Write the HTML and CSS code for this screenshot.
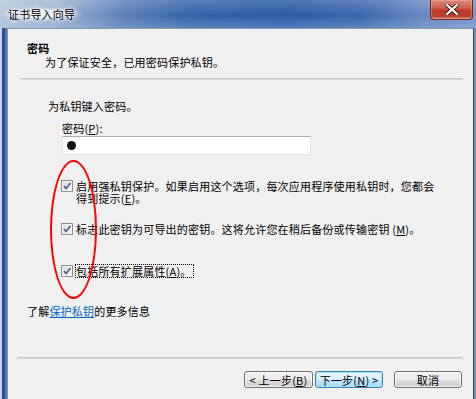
FILE: index.html
```html
<!DOCTYPE html>
<html lang="zh-CN">
<head>
    <meta charset="UTF-8">
    <title>证书导入向导</title>
    <link rel="stylesheet" href="styles.css">
</head>
<body>
    <div class="window">
        <div class="titlebar">
            <span class="title">证书导入向导</span>
            <button class="close-btn" aria-label="关闭">
                <svg width="14" height="11" viewBox="0 0 14 11">
                    <path d="M2 1 L12 10 M12 1 L2 10" stroke="#3a2020" stroke-width="4" stroke-linecap="square"/>
                    <path d="M2 1 L12 10 M12 1 L2 10" stroke="#fff" stroke-width="2.2" stroke-linecap="square"/>
                </svg>
            </button>
        </div>

        <div class="frame">
            <div class="client">
                <div class="wizard-header">
                    <div class="header-title">密码</div>
                    <div class="header-sub">为了保证安全，已用密码保护私钥。</div>
                </div>
                <div class="divider header-divider"></div>

                <div class="page">
                    <p class="prompt">为私钥键入密码。</p>
                    <label class="field-label" for="pwd">密码(<u>P</u>):</label>
                    <div class="password-box" id="pwd"><span class="dot"></span></div>

                    <div class="option opt-first">
                        <span class="checkbox"><svg width="12" height="12" viewBox="0 0 12 12"><path d="M3 6 L5 8.5 L9.5 3" fill="none" stroke="#4a5d8f" stroke-width="1.6"/></svg></span>
                        <span class="option-text">启用强私钥保护。如果启用这个选项，每次应用程序使用私钥时，您都会得到提示(<u>E</u>)。</span>
                    </div>
                    <div class="option opt-second">
                        <span class="checkbox"><svg width="12" height="12" viewBox="0 0 12 12"><path d="M3 6 L5 8.5 L9.5 3" fill="none" stroke="#4a5d8f" stroke-width="1.6"/></svg></span>
                        <span class="option-text">标志此密钥为可导出的密钥。这将允许您在稍后备份或传输密钥 (<u>M</u>)。</span>
                    </div>
                    <div class="option opt-third">
                        <span class="checkbox"><svg width="12" height="12" viewBox="0 0 12 12"><path d="M3 6 L5 8.5 L9.5 3" fill="none" stroke="#4a5d8f" stroke-width="1.6"/></svg></span>
                        <span class="option-text focused">包括所有扩展属性(<u>A</u>)。</span>
                    </div>

                    <p class="more-info">了解<a href="#">保护私钥</a>的更多信息</p>
                </div>

                <div class="divider footer-divider"></div>
                <div class="buttons">
                    <button class="btn">&lt; 上一步(<u>B</u>)</button>
                    <button class="btn btn-default">下一步(<u>N</u>) &gt;</button>
                    <button class="btn btn-cancel">取消</button>
                </div>

                <!-- red hand-drawn mark over the checkboxes -->
                <div class="annotation"></div>
            </div>
        </div>
    </div>
</body>
</html>
```

FILE: styles.css
```css
:root {
    --face: #f0f0f0;
    --text: #000;
    --cjk: "Noto Sans CJK SC", "Noto Sans", sans-serif;
}

* {
    box-sizing: border-box;
}

body {
    margin: 0;
    background: #fff;
    font-family: var(--cjk);
    font-size: 11px;
    letter-spacing: 0.2px;
    color: var(--text);
}

.window {
    width: 476px;
    height: 399px;
    overflow: hidden;
    display: flex;
    flex-direction: column;
}

/* title bar */
.titlebar {
    height: 28px;
    flex: none;
    display: flex;
    align-items: flex-start;
    background:
        linear-gradient(to bottom, rgba(255,255,255,0.18), rgba(255,255,255,0) 55%, rgba(160,185,220,0.35)),
        linear-gradient(to right, #b9c8dd 0%, #9fb3d0 12%, #5b7fb8 26%, #3463a9 40%, #2b5aa5 60%, #3c67ad 76%, #6a8bc2 90%, #7896c8 100%);
}

.title {
    margin-top: 7px;
    padding: 0 8px;
    line-height: 14px;
    background: radial-gradient(ellipse at center, rgba(235,240,246,0.9) 30%, rgba(235,240,246,0) 72%);
    text-shadow: 0 0 4px #fff, 0 0 6px #fff;
}

.close-btn {
    margin-left: auto;
    margin-right: 3px;
    width: 43px;
    height: 20px;
    padding: 0;
    border: 1px solid #6b2a22;
    border-top: none;
    border-radius: 0 0 4px 4px;
    background: linear-gradient(to bottom, #dc8a7c 0%, #d06050 40%, #c0392a 55%, #b8402e 85%, #d98a78 100%);
    display: flex;
    align-items: center;
    justify-content: center;
    box-shadow: inset 0 0 0 1px rgba(255,200,190,0.35);
}

/* window frame */
.frame {
    flex: 1;
    display: flex;
    padding: 0 3px 0 8px;
    background:
        linear-gradient(to right, #c9d3e3 0 2px, #2b4c98 2px 5px, #5878b8 5px 7px, #8391ab 7px 8px, transparent 8px),
        linear-gradient(to left, #6f8cc0 0 2px, #3b4656 2px 3px, transparent 3px),
        #7896c8;
}

.client {
    flex: 1;
    position: relative;
    background: var(--face);
    border-top: 1px solid #8c9ab3;
}

.wizard-header {
    padding: 12px 0 0 19px;
    line-height: 14px;
}

.header-title {
    font-weight: bold;
}

.header-sub {
    padding-left: 18px;
}

.divider {
    height: 2px;
    border-top: 1px solid #c9c9c9;
    border-bottom: 1px solid #d9d9d9;
}

.header-divider {
    margin: 9px 10px 0 12px;
}

/* page body */
.page {
    padding: 0 10px 0 19px;
}

.prompt {
    margin: 19px 0 0 21px;
    line-height: 14px;
}

.field-label {
    display: block;
    margin: 8px 0 0 35px;
    line-height: 14px;
}

.password-box {
    margin: 1px 0 0 35px;
    width: 249px;
    height: 19px;
    background: #fff;
    border: 1px solid #e2e3ea;
    border-top-color: #abadb3;
    display: flex;
    align-items: center;
    padding-left: 4px;
}

.dot {
    width: 9px;
    height: 9px;
    border-radius: 50%;
    background: #111;
}

.option {
    display: flex;
    align-items: flex-start;
    gap: 3px;
    margin-left: 34px;
}

.opt-first { margin-top: 25px; }
.opt-second { margin-top: 19px; }
.opt-third { margin-top: 30px; }

.checkbox {
    flex: none;
    width: 12px;
    height: 12px;
    border: 1px solid #8e8f8f;
    background: linear-gradient(135deg, #d8d8d8, #f6f6f6);
    box-shadow: inset 0 0 0 1px #f4f4f4;
    display: flex;
    align-items: center;
    justify-content: center;
}

.checkbox svg {
    flex: none;
}

.option-text {
    width: 364px;
    line-height: 12px;
}

.option-text.focused {
    width: auto;
    outline: 1px dotted #000;
    outline-offset: 0;
    padding: 0 1px 0 0;
}

.more-info {
    margin: 27px 0 0;
    line-height: 14px;
}

.more-info a {
    color: #0066cc;
}

.footer-divider {
    margin: 39px 10px 0 9px;
}

.buttons {
    display: flex;
    justify-content: flex-end;
    padding: 12px 11px 0 0;
}

.btn {
    width: 69px;
    height: 17px;
    padding: 0;
    font-family: var(--cjk);
    font-size: 11px;
    letter-spacing: 0.2px;
    line-height: 14px;
    color: #000;
    border: 1px solid #707070;
    border-radius: 3px;
    background: linear-gradient(to bottom, #f2f2f2 0%, #ebebeb 50%, #dddddd 51%, #cfcfcf 100%);
    box-shadow: inset 0 0 0 1px rgba(255,255,255,0.7);
}

.btn-default {
    width: 68px;
    margin-left: 2px;
    border-color: #3c7fb1;
    background: linear-gradient(to bottom, #eaf6fd 0%, #d9f0fc 50%, #bee6fd 51%, #a7d9f5 100%);
    box-shadow: inset 0 0 0 1px #a9e4fe;
}

.btn-cancel {
    width: 68px;
    margin-left: 11px;
}

.annotation {
    position: absolute;
    left: 42px;
    top: 131px;
    width: 47px;
    height: 139px;
    border: 2px solid #f00;
    border-radius: 50%;
    pointer-events: none;
}
```
